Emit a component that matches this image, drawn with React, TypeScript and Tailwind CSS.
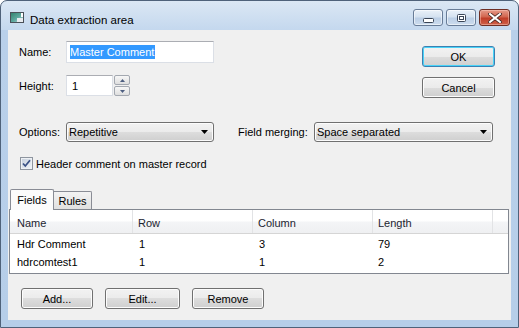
import React from "react";

const btnBg =
  "bg-[linear-gradient(to_bottom,#f2f2f2_0%,#ebebeb_50%,#dddddd_50%,#cfcfcf_100%)]";

function PushButton({
  children,
  w,
  def = false,
}: {
  children: React.ReactNode;
  w: string;
  def?: boolean;
}) {
  return (
    <div
      className={
        "h-[21px] rounded-[3px] border flex items-center justify-center leading-[14px] " +
        btnBg +
        " " +
        w +
        " " +
        (def
          ? "border-[#3c7fb1] shadow-[inset_0_0_0_1px_#48d3f8]"
          : "border-[#707070] shadow-[inset_0_0_0_1px_#fcfcfc]")
      }
    >
      {children}
    </div>
  );
}

function Arrow() {
  return (
    <svg width="7" height="4" viewBox="0 0 7 4">
      <path d="M0 0 H7 L3.5 4 Z" fill="#000" />
    </svg>
  );
}

function Select({ w, children }: { w: string; children: React.ReactNode }) {
  return (
    <div
      className={
        "h-[20px] rounded-[3px] border border-[#707070] shadow-[inset_0_0_0_1px_#fcfcfc] flex items-center pl-[2px] pr-[5px] leading-[14px] " +
        btnBg +
        " " +
        w
      }
    >
      <span className="flex-1">{children}</span>
      <Arrow />
    </div>
  );
}

function SpinBtn({ up }: { up: boolean }) {
  return (
    <div className="w-[16px] h-[10px] border border-[#a3a8b0] rounded-[2px] bg-[linear-gradient(to_bottom,#f7f7f7,#dedede)] flex items-center justify-center">
      <svg width="5" height="3" viewBox="0 0 5 3">
        {up ? (
          <path d="M0 3 L2.5 0 L5 3 Z" fill="#4d5e80" />
        ) : (
          <path d="M0 0 L5 0 L2.5 3 Z" fill="#4d5e80" />
        )}
      </svg>
    </div>
  );
}

function TitleBtn({ kind }: { kind: "min" | "max" | "close" }) {
  if (kind === "close") {
    return (
      <div className="w-[31px] h-[17px] rounded-[3px] border border-[#6e2e24] bg-[linear-gradient(to_bottom,#e59a89_0%,#d2664f_45%,#c03d28_55%,#cf6149_100%)] shadow-[inset_0_0_0_1px_rgba(255,210,200,0.45)] flex items-center justify-center">
        <svg width="14" height="10" viewBox="0 0 14 10">
          <path
            d="M2 1 L12 9 M12 1 L2 9"
            stroke="#4a2a26"
            strokeWidth="3.6"
            strokeLinecap="square"
          />
          <path
            d="M2 1 L12 9 M12 1 L2 9"
            stroke="#ffffff"
            strokeWidth="2"
            strokeLinecap="square"
          />
        </svg>
      </div>
    );
  }
  return (
    <div className="w-[30px] h-[17px] rounded-[3px] border border-[#687c97] bg-[linear-gradient(to_bottom,#eaf1f9_0%,#d5e2f0_45%,#bccfe6_55%,#cddcee_100%)] shadow-[inset_0_0_0_1px_rgba(255,255,255,0.55)] flex items-center justify-center">
      {kind === "min" ? (
        <svg width="11" height="5" viewBox="0 0 11 5" className="mt-[6px]">
          <rect x="0.5" y="0.5" width="10" height="4" rx="1" fill="#fff" stroke="#3a4556" />
        </svg>
      ) : (
        <svg width="9" height="8" viewBox="0 0 9 8">
          <rect x="0.5" y="0.5" width="8" height="7" rx="1" fill="#fff" stroke="#3a4556" />
          <rect x="2.5" y="2.5" width="4" height="3" fill="#fff" stroke="#3a4556" />
        </svg>
      )}
    </div>
  );
}

function CheckBox() {
  return (
    <svg width="13" height="13" viewBox="0 0 13 13">
      <defs>
        <linearGradient id="cbg" x1="0" y1="0" x2="1" y2="1">
          <stop offset="0" stopColor="#c9d2de" />
          <stop offset="1" stopColor="#eef2f7" />
        </linearGradient>
      </defs>
      <rect x="0.5" y="0.5" width="12" height="12" fill="#eef1f5" stroke="#8e959f" />
      <rect x="2" y="2" width="9" height="9" fill="url(#cbg)" />
      <path
        d="M3 6.5 L5.3 9 L10 3.3"
        fill="none"
        stroke="#3b5286"
        strokeWidth="1.8"
      />
    </svg>
  );
}

function AppIcon() {
  return (
    <svg width="14" height="11" viewBox="0 0 14 11">
      <defs>
        <linearGradient id="aig" x1="0" y1="0" x2="1" y2="1">
          <stop offset="0" stopColor="#2f7f6a" />
          <stop offset="0.55" stopColor="#5fa9a0" />
          <stop offset="1" stopColor="#dfe6ec" />
        </linearGradient>
      </defs>
      <rect x="0.5" y="0.5" width="13" height="10" fill="url(#aig)" stroke="#4a5058" />
      <rect x="7" y="6" width="6" height="4" fill="#e8ecf0" />
      <rect x="11" y="1" width="2" height="4" fill="#ffffff" />
    </svg>
  );
}

const rows = [
  ["Hdr Comment", "1", "3", "79"],
  ["hdrcomtest1", "1", "1", "2"],
];

export default function App() {
  return (
    <div className="w-[519px] h-[328px] bg-white font-['Liberation_Sans',Arial,sans-serif] text-[11px] text-black">
      <div className="w-[519px] h-[328px] flex flex-col rounded-t-[7px] border border-[#4f627a] bg-[linear-gradient(to_bottom,#dbe7f4_0px,#c4d8ee_29px,#b9d0ea_29px,#b6cee9_100%)] overflow-hidden">
        {/* Title bar */}
        <div className="h-[29px] flex items-start pl-[9px] pr-[8px] shrink-0">
          <div className="mt-[11px]">
            <AppIcon />
          </div>
          <span className="ml-[6px] mt-[12px] text-[11.5px] leading-[14px] text-black">
            Data extraction area
          </span>
          <div className="ml-auto mt-[8px] flex gap-[3px]">
            <TitleBtn kind="min" />
            <TitleBtn kind="max" />
            <TitleBtn kind="close" />
          </div>
        </div>

        {/* Client area */}
        <div className="mx-[7px] h-[290px] bg-[#f0f0f0] shrink-0 flex flex-col leading-[14px]">
          {/* Top block */}
          <div className="flex h-[68px] shrink-0">
            <div className="pl-[11px] pt-[11px]">
              <div className="flex items-center h-[22px]">
                <span className="w-[47px]">Name:</span>
                <div className="w-[148px] h-[22px] border border-[#dbdfe6] border-t-[#abadb3] bg-white flex items-center pl-[3px]">
                  <span className="bg-[#3399ff] text-white h-[14px] pr-px">Master Comment</span>
                </div>
              </div>
              <div className="flex items-center h-[21px] mt-[12px]">
                <span className="w-[47px]">Height:</span>
                <div className="w-[47px] h-[21px] border border-[#dbdfe6] border-t-[#abadb3] bg-white flex items-center pl-[5px]">
                  1
                </div>
                <div className="ml-px flex flex-col gap-px">
                  <SpinBtn up />
                  <SpinBtn up={false} />
                </div>
              </div>
            </div>
            <div className="ml-auto pr-[16px] pt-[16px] flex flex-col gap-[10px]">
              <PushButton w="w-[73px]" def>
                OK
              </PushButton>
              <PushButton w="w-[73px]">Cancel</PushButton>
            </div>
          </div>

          {/* Options row */}
          <div className="flex items-center h-[20px] mt-[24px] pl-[11px] shrink-0">
            <span className="w-[47px]">Options:</span>
            <Select w="w-[148px]">Repetitive</Select>
            <span className="ml-[24px] w-[76px]">Field merging:</span>
            <Select w="w-[179px]">Space separated</Select>
          </div>

          {/* Checkbox row */}
          <div className="flex items-center h-[13px] mt-[15px] pl-[12px] shrink-0">
            <CheckBox />
            <span className="ml-[3px]">Header comment on master record</span>
          </div>

          {/* Tabs */}
          <div className="flex items-end h-[20px] mt-[19px] pl-[2px] shrink-0">
            <div className="relative z-10 w-[44px] h-[21px] -mb-px border border-b-0 border-[#898c95] rounded-t-[2px] bg-[#fbfbfb] flex items-start justify-center pt-[3px]">
              Fields
            </div>
            <div className="w-[38px] h-[18px] border-t border-r border-[#898c95] rounded-tr-[2px] bg-[linear-gradient(to_bottom,#f3f3f3,#e0e0e0)] flex items-start justify-center pt-[2px]">
              Rules
            </div>
          </div>

          {/* List */}
          <div className="ml-px w-[500px] h-[65px] border border-[#828790] bg-white shrink-0">
            <div className="flex h-[24px] border-b border-[#d5d5d5] bg-[linear-gradient(to_bottom,#ffffff_0%,#ffffff_45%,#f3f4f6_55%,#eff0f2_100%)] text-[#1c2430]">
              <div className="w-[123px] border-r border-[#e2e3e5] pl-[7px] pt-[6px]">Name</div>
              <div className="w-[120px] border-r border-[#e2e3e5] pl-[5px] pt-[6px]">Row</div>
              <div className="w-[120px] border-r border-[#e2e3e5] pl-[5px] pt-[6px]">Column</div>
              <div className="w-[120px] border-r border-[#e2e3e5] pl-[5px] pt-[6px]">Length</div>
              <div className="flex-1" />
            </div>
            {rows.map((r) => (
              <div key={r[0]} className="flex h-[18px]">
                <div className="w-[123px] pl-[7px] pt-[3px]">{r[0]}</div>
                <div className="w-[120px] pl-[6px] pt-[3px]">{r[1]}</div>
                <div className="w-[120px] pl-[6px] pt-[3px]">{r[2]}</div>
                <div className="w-[120px] pl-[5px] pt-[3px]">{r[3]}</div>
              </div>
            ))}
          </div>

          {/* Bottom buttons */}
          <div className="flex gap-[12px] mt-[14px] pl-[13px] shrink-0">
            <PushButton w="w-[72px]">Add...</PushButton>
            <PushButton w="w-[75px]">Edit...</PushButton>
            <PushButton w="w-[72px]">Remove</PushButton>
          </div>
        </div>
      </div>
    </div>
  );
}
